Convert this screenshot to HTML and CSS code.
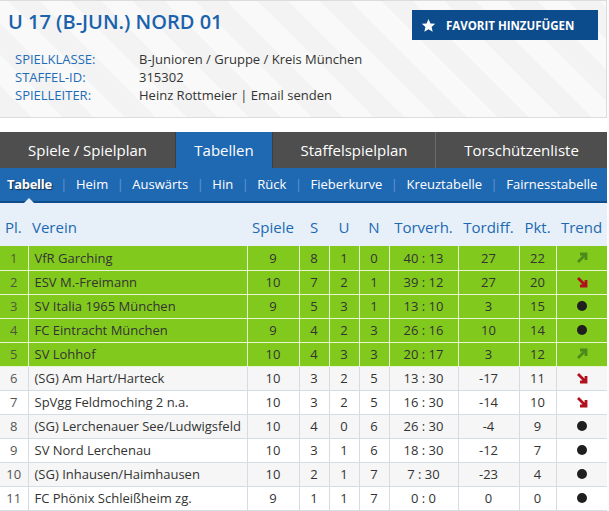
FILE: index.html
```html
<!DOCTYPE html>
<html lang="de">
<head>
<meta charset="utf-8">
<title>U 17 (B-Jun.) Nord 01</title>
<link rel="stylesheet" href="styles.css">
</head>
<body>
<div class="page">
  <header class="league">
    <div class="league-top">
      <h1 class="league-title">U 17 (B-JUN.) NORD 01</h1>
      <button class="fav-btn" type="button">
        <svg class="star" viewBox="0 0 24 24" width="15" height="15"><path d="M12 1.5l3.1 7.2 7.6.6-5.8 5 1.8 7.5L12 17.8l-6.7 4 1.8-7.5-5.8-5 7.6-.6z" fill="#fff"/></svg>
        <span>FAVORIT HINZUFÜGEN</span>
      </button>
    </div>
    <dl class="info">
      <div class="info-row"><dt>SPIELKLASSE:</dt><dd>B-Junioren / Gruppe / Kreis München</dd></div>
      <div class="info-row"><dt>STAFFEL-ID:</dt><dd>315302</dd></div>
      <div class="info-row"><dt>SPIELLEITER:</dt><dd>Heinz Rottmeier | Email senden</dd></div>
    </dl>
  </header>

  <nav class="tabs">
    <a class="tab tab-1">Spiele / Spielplan</a>
    <a class="tab tab-2 active">Tabellen</a>
    <a class="tab tab-3">Staffelspielplan</a>
    <a class="tab tab-4">Torschützenliste</a>
  </nav>

  <nav class="subnav">
    <a class="sub active">Tabelle</a><span class="sep">|</span>
    <a class="sub">Heim</a><span class="sep">|</span>
    <a class="sub">Auswärts</a><span class="sep">|</span>
    <a class="sub">Hin</a><span class="sep">|</span>
    <a class="sub">Rück</a><span class="sep">|</span>
    <a class="sub">Fieberkurve</a><span class="sep">|</span>
    <a class="sub">Kreuztabelle</a><span class="sep">|</span>
    <a class="sub">Fairnesstabelle</a>
  </nav>

  <table class="standings">
    <colgroup>
      <col class="c-pl"><col class="c-team"><col class="c-sp"><col class="c-s"><col class="c-u"><col class="c-n"><col class="c-tv"><col class="c-td"><col class="c-pk"><col class="c-tr">
    </colgroup>
    <thead>
      <tr>
        <th class="l pl">Pl.</th><th class="l team">Verein</th><th>Spiele</th><th>S</th><th>U</th><th>N</th><th>Torverh.</th><th>Tordiff.</th><th>Pkt.</th><th>Trend</th>
      </tr>
    </thead>
    <tbody>
      <tr class="up"><td class="pl">1</td><td class="team">VfR Garching</td><td>9</td><td>8</td><td>1</td><td>0</td><td>40 : 13</td><td>27</td><td>22</td><td><svg class="arr" viewBox="0 0 12 12" width="12" height="12"><path d="M2 10L9.5 2.5M4 2H10V8" fill="none" stroke="#4c8a1c" stroke-width="2.8"/></svg></td></tr>
      <tr class="up"><td class="pl">2</td><td class="team">ESV M.-Freimann</td><td>10</td><td>7</td><td>2</td><td>1</td><td>39 : 12</td><td>27</td><td>20</td><td><svg class="arr" viewBox="0 0 12 12" width="12" height="12"><path d="M2 2L9.5 9.5M10 4V10H4" fill="none" stroke="#b2101d" stroke-width="2.8"/></svg></td></tr>
      <tr class="up"><td class="pl">3</td><td class="team">SV Italia 1965 München</td><td>9</td><td>5</td><td>3</td><td>1</td><td>13 : 10</td><td>3</td><td>15</td><td><span class="dot"></span></td></tr>
      <tr class="up"><td class="pl">4</td><td class="team">FC Eintracht München</td><td>9</td><td>4</td><td>2</td><td>3</td><td>26 : 16</td><td>10</td><td>14</td><td><span class="dot"></span></td></tr>
      <tr class="up"><td class="pl">5</td><td class="team">SV Lohhof</td><td>10</td><td>4</td><td>3</td><td>3</td><td>20 : 17</td><td>3</td><td>12</td><td><svg class="arr" viewBox="0 0 12 12" width="12" height="12"><path d="M2 10L9.5 2.5M4 2H10V8" fill="none" stroke="#4c8a1c" stroke-width="2.8"/></svg></td></tr>
      <tr class="alt"><td class="pl">6</td><td class="team">(SG) Am Hart/Harteck</td><td>10</td><td>3</td><td>2</td><td>5</td><td>13 : 30</td><td>-17</td><td>11</td><td><svg class="arr" viewBox="0 0 12 12" width="12" height="12"><path d="M2 2L9.5 9.5M10 4V10H4" fill="none" stroke="#b2101d" stroke-width="2.8"/></svg></td></tr>
      <tr><td class="pl">7</td><td class="team">SpVgg Feldmoching 2 n.a.</td><td>10</td><td>3</td><td>2</td><td>5</td><td>16 : 30</td><td>-14</td><td>10</td><td><svg class="arr" viewBox="0 0 12 12" width="12" height="12"><path d="M2 2L9.5 9.5M10 4V10H4" fill="none" stroke="#b2101d" stroke-width="2.8"/></svg></td></tr>
      <tr class="alt"><td class="pl">8</td><td class="team">(SG) Lerchenauer See/Ludwigsfeld</td><td>10</td><td>4</td><td>0</td><td>6</td><td>26 : 30</td><td>-4</td><td>9</td><td><span class="dot"></span></td></tr>
      <tr><td class="pl">9</td><td class="team">SV Nord Lerchenau</td><td>10</td><td>3</td><td>1</td><td>6</td><td>18 : 30</td><td>-12</td><td>7</td><td><span class="dot"></span></td></tr>
      <tr class="alt"><td class="pl">10</td><td class="team">(SG) Inhausen/Haimhausen</td><td>10</td><td>2</td><td>1</td><td>7</td><td>7 : 30</td><td>-23</td><td>4</td><td><span class="dot"></span></td></tr>
      <tr><td class="pl">11</td><td class="team">FC Phönix Schleißheim zg.</td><td>9</td><td>1</td><td>1</td><td>7</td><td>0 : 0</td><td>0</td><td>0</td><td><span class="dot"></span></td></tr>
    </tbody>
  </table>
</div>
</body>
</html>
```

FILE: styles.css
```css
* { box-sizing: border-box; }
html, body { margin: 0; padding: 0; background: #fff; }
body { font-family: "Open Sans", "Liberation Sans", sans-serif; color: #333; }
.page { width: 607px; }

/* League header */
.league {
  border: 1px solid #dcdcdc;
  border-left: 0;
  height: 118px;
  padding: 9px 8px 0 8px;
  margin-bottom: 14px;
  background: repeating-linear-gradient(45deg, #f3f3f3 0 22px, #f9f9f9 22px 44px);
}
.league-top { display: flex; justify-content: space-between; align-items: flex-start; }
.league-title {
  margin: 0;
  font-size: 20px;
  line-height: 24px;
  font-weight: 600;
  color: #1a62ac;
}
.fav-btn {
  display: flex;
  align-items: center;
  width: 186px;
  height: 30px;
  margin: 0;
  padding: 0 0 0 9px;
  border: 0;
  background: #0d4c8c;
  color: #fff;
  font-family: inherit;
  font-size: 11.5px;
  font-weight: 700;
  cursor: pointer;
}
.fav-btn .star { margin-right: 10px; }
.info { margin: 10px 0 0 7px; font-size: 13px; line-height: 18px; }
.info-row { display: flex; }
.info dt { width: 124px; color: #1e6cb6; }
.info dd { margin: 0; color: #333; }

/* Tabs */
.tabs { display: flex; height: 36px; background: #4e4e4e; }
.tab {
  display: flex;
  align-items: center;
  justify-content: center;
  color: #fff;
  font-size: 15px;
  border-right: 1px solid #6a6a6a;
  padding-bottom: 1px;
}
.tab-1 { width: 176px; border-right-color: #3e3e3e; }
.tab-2 { width: 97px; border-right-color: #3e3e3e; }
.tab-3 { width: 163px; }
.tab-4 { flex: 1; border-right: 0; }
.tab.active { background: #1f69b2; }

/* Sub nav */
.subnav {
  position: relative;
  display: flex;
  align-items: center;
  height: 35px;
  padding: 0 0 1px 7px;
  background: #1f69b2;
  border-bottom: 2px solid #0f4c8a;
  font-size: 13px;
  color: #fff;
  white-space: nowrap;
}
.sub { color: #fff; }
.sub.active { font-weight: 700; text-shadow: 1px 1px 1px rgba(0,0,0,0.55); position: relative; letter-spacing: -0.3px; }
.sub.active::after {
  content: "";
  position: absolute;
  left: 50%;
  bottom: -11px;
  margin-left: -6px;
  border-left: 6px solid transparent;
  border-right: 6px solid transparent;
  border-bottom: 6px solid #e7f0f9;
}
.sep { color: #5f96cf; margin: 0 8.5px; font-size: 13px; }

/* Table */
.standings {
  width: 607px;
  border-collapse: collapse;
  table-layout: fixed;
  font-size: 13px;
}
.c-pl { width: 28px; }
.c-team { width: 219px; }
.c-sp { width: 52px; }
.c-s { width: 30px; }
.c-u { width: 30px; }
.c-n { width: 30px; }
.c-tv { width: 69px; }
.c-td { width: 61px; }
.c-pk { width: 37px; }
.c-tr { width: 51px; }
.standings thead tr { background: #e7f0f9; height: 43px; }
.standings th {
  font-weight: 400;
  font-size: 15px;
  color: #1c69b3;
  text-align: center;
  padding: 4px 0 0 0;
  white-space: nowrap;
}
.standings th.l { text-align: left; }
.standings th.pl { padding-left: 5px; }
.standings th.team { padding-left: 4px; }
.standings td {
  height: 24px;
  padding: 0;
  text-align: center;
  border: 1px solid #d6dce4;
  color: #333;
  white-space: nowrap;
}
.standings td:first-child { border-left: 0; }
.standings td:last-child { border-right: 0; }
.standings td.pl { color: #555; }
.standings td.team { text-align: left; padding-left: 6px; }
.standings tbody tr { background: #fff; }
.standings tbody tr.alt { background: #f6f6f6; }
.standings tbody tr.up { background: #82c91e; }
.standings tbody tr.up td { border-color: #e8f5d2; }
.standings tbody tr.up td.pl { color: #4d5a3a; }
.standings tbody tr:first-child td { border-top: 0; }
.arr { display: block; margin: 0 auto; }
.dot { display: block; width: 10px; height: 10px; margin: 0 auto; border-radius: 50%; background: #1f1f1f; }
```
